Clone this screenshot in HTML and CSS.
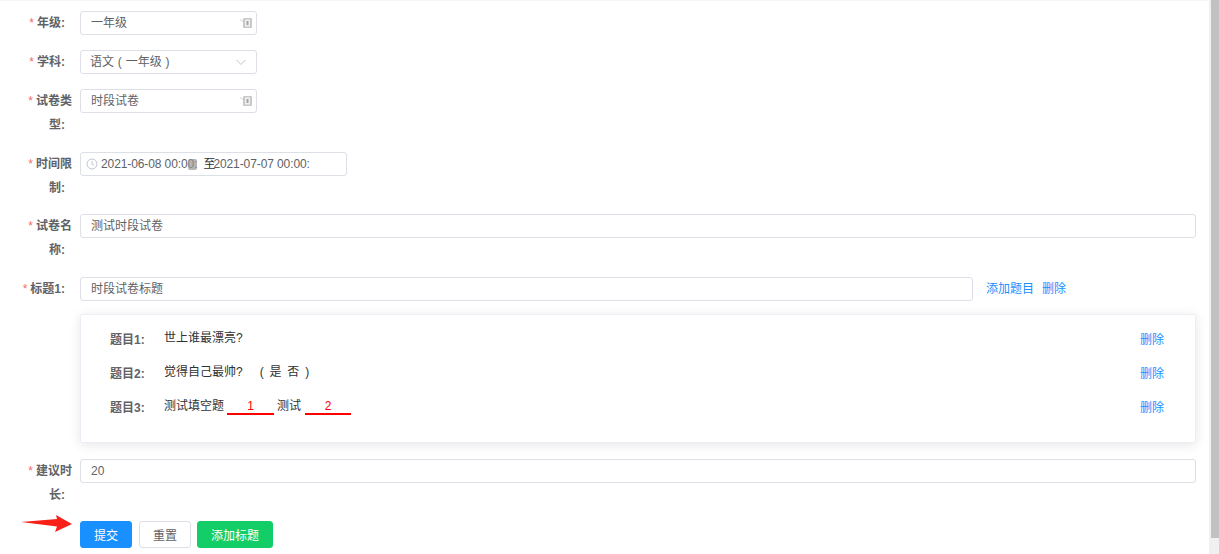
FILE: index.html
```html
<!DOCTYPE html>
<html>
<head>
<meta charset="utf-8">
<title>试卷</title>
<link rel="stylesheet" href="styles.css">
</head>
<body>
<div class="page">
<form class="form">
  <div class="row row-short">
    <label class="label"><i>*</i>年级:<em class="gap"></em></label>
    <div class="input input-sm disabled"><span>一年级</span>
      <svg class="no-icon" width="12" height="14" viewBox="0 0 12 14"><path d="M0 3.500l3 2" stroke="#d4d4d4"/><rect x="3" y="2" width="9" height="10" rx="1" fill="#c9c9c9"/><rect x="5" y="3.500" width="5" height="7" fill="#f0f0f0"/><path d="M6.500 5h2v4h-2z" fill="#a4a4a4"/></svg>
    </div>
  </div>
  <div class="row row-short">
    <label class="label"><i>*</i>学科:<em class="gap"></em></label>
    <div class="input input-sm"><span class="spaced">语文 ( 一年级 )</span>
      <svg class="arrow" width="12" height="12" viewBox="0 0 12 12"><path d="M1.500 4l4.500 4.500 4.500-4.500" fill="none" stroke="#c0c4cc"/></svg>
    </div>
  </div>
  <div class="row row-tall">
    <label class="label"><i>*</i>试卷类型:<em class="gap"></em></label>
    <div class="input input-sm disabled"><span>时段试卷</span>
      <svg class="no-icon" width="12" height="14" viewBox="0 0 12 14"><path d="M0 3.500l3 2" stroke="#d4d4d4"/><rect x="3" y="2" width="9" height="10" rx="1" fill="#c9c9c9"/><rect x="5" y="3.500" width="5" height="7" fill="#f0f0f0"/><path d="M6.500 5h2v4h-2z" fill="#a4a4a4"/></svg>
    </div>
  </div>
  <div class="row row-time">
    <label class="label"><i>*</i>时间限制:<em class="gap"></em></label>
    <div class="input input-date">
      <svg class="clock" width="12" height="12" viewBox="0 0 12 12"><circle cx="6" cy="6" r="5" fill="none" stroke="#c0c4cc"/><path d="M6 3v3.300l2 1" fill="none" stroke="#c0c4cc"/></svg>
      <span class="date">2021-06-08 00:00:</span>
      <span class="date-mark"></span>
      <span class="sep">至</span>
      <span class="date">2021-07-07 00:00:</span>
    </div>
  </div>
  <div class="row row-tall">
    <label class="label"><i>*</i>试卷名称:<em class="gap"></em></label>
    <div class="input input-full"><span>测试时段试卷</span></div>
  </div>
  <div class="row row-title">
    <label class="label"><i>*</i>标题1:<em class="gap"></em></label>
    <div class="input input-title"><span>时段试卷标题</span></div>
    <a class="link link-add">添加题目</a>
    <a class="link">删除</a>
  </div>
  <div class="card">
    <div class="q">
      <span class="q-label">题目1:</span>
      <span class="q-text">世上谁最漂亮?</span>
      <a class="link">删除</a>
    </div>
    <div class="q">
      <span class="q-label">题目2:</span>
      <span class="q-text">觉得自己最帅?<span class="opts">( 是 否 )</span></span>
      <a class="link">删除</a>
    </div>
    <div class="q">
      <span class="q-label">题目3:</span>
      <span class="q-text">测试填空题<u class="blank">1</u>测试<u class="blank blank-2">2</u></span>
      <a class="link">删除</a>
    </div>
  </div>
  <div class="row row-tall">
    <label class="label"><i>*</i>建议时长:<em class="gap"></em></label>
    <div class="input input-full"><span>20</span></div>
  </div>
  <div class="actions">
    <svg class="pointer" width="52" height="20" viewBox="0 0 52 20"><path d="M0 8L36 5 35 1 51 10 34 18 36 12.500z" fill="#fa2018"/></svg>
    <button type="button" class="btn btn-primary">提交</button>
    <button type="button" class="btn">重置</button>
    <button type="button" class="btn btn-green">添加标题</button>
  </div>
</form>
</div>
<div class="scrollbar"><div class="thumb"></div></div>
</body>
</html>
```

FILE: styles.css
```css
html, body {margin: 0; padding: 0; height: 100%; overflow: hidden;}
body {display: flex; background: #fff; font-family: "Liberation Sans", "Noto Sans CJK SC", sans-serif; font-size: 12px; color: #606266;}
i {font-style: normal;}
.page {width: 1209px; flex: none; height: 554px; background: #fff; border-top: 1px solid #f5f5f5; box-sizing: border-box; overflow: hidden;}
.scrollbar {flex: 1; background: #f0f0f0; padding-left: 2px;}
.thumb {height: 538px; background: #c1c1c1;}
.form {padding: 10px 13px 0 0;}
.row {display: flex; align-items: flex-start;}
.row-short {height: 39px;}
.row-tall {height: 63px;}
.row-time {height: 62px;}
.row-title {height: 37px;}
.label {width: 72px; margin-right: 8px; padding-left: 28px; box-sizing: border-box; text-align: right; line-height: 24px; font-weight: 700; flex: none;}
.row-title .label {padding-left: 0;}
.label i {color: #f56c6c; font-weight: 400; margin-right: 3px;}
.gap {display: inline-block; width: 7px;}
.input {height: 24px; border: 1px solid #dcdfe6; border-radius: 3px; box-sizing: border-box; background: #fff; display: flex; align-items: center; padding: 0 10px; line-height: 22px; position: relative;}
.input-sm {width: 177px; justify-content: space-between;}
.input-date {width: 267px; padding: 0 5px; white-space: nowrap;}
.input-full {flex: 1;}
.input-title {width: 893px; flex: none;}
.spaced {word-spacing: .5px; margin-left: -1px;}
.no-icon {margin-right: -6px;}
.arrow {margin-right: -1px;}
.clock {margin-right: 3px; flex: none;}
.date {flex: none; letter-spacing: -.1px;}
.date-mark {position: absolute; left: 107px; top: 6px; width: 9px; height: 11px; background: rgba(150, 150, 150, .7); border-radius: 2px;}
.sep {width: 10px; margin-left: 6px; color: #303133; flex: none;}
.link {color: #1890ff; line-height: 24px;}
.link-add {margin: 0 8px 0 13px;}
.card {margin: 0 0 16px 80px; height: 129px; border: 1px solid #ebeef5; border-radius: 2px; box-shadow: 0 2px 12px 0 rgba(0, 0, 0, .1); box-sizing: border-box; padding: 7px 31px 0 29px;}
.q {display: flex; height: 34px; align-items: flex-start; padding-top: 6px; box-sizing: border-box;}
.q-label {width: 54px; font-weight: 700; line-height: 24px; flex: none;}
.q-text {flex: 1; color: #303133; line-height: 20px;}
.opts {margin-left: 17px; word-spacing: 2.500px;}
.blank {display: inline-block; width: 47px; margin: 0 3px; text-align: center; color: #f00; text-decoration: none; border-bottom: 2px solid #f00; line-height: 14px;}
.blank-2 {width: 46px; margin-left: 4px;}
.actions {display: flex; gap: 7px; padding-left: 80px; position: relative; margin-top: -1px;}
.pointer {position: absolute; left: 21px; top: -7px;}
.btn {height: 27px; width: 52px; border: 1px solid #dcdfe6; border-radius: 3px; background: #fff; color: #606266; font: inherit; padding: 0;}
.btn-primary {background: #1890ff; border-color: #1890ff; color: #fff;}
.btn-green {background: #13ce66; border-color: #13ce66; color: #fff; width: 76px; margin-left: -1px;}
```
